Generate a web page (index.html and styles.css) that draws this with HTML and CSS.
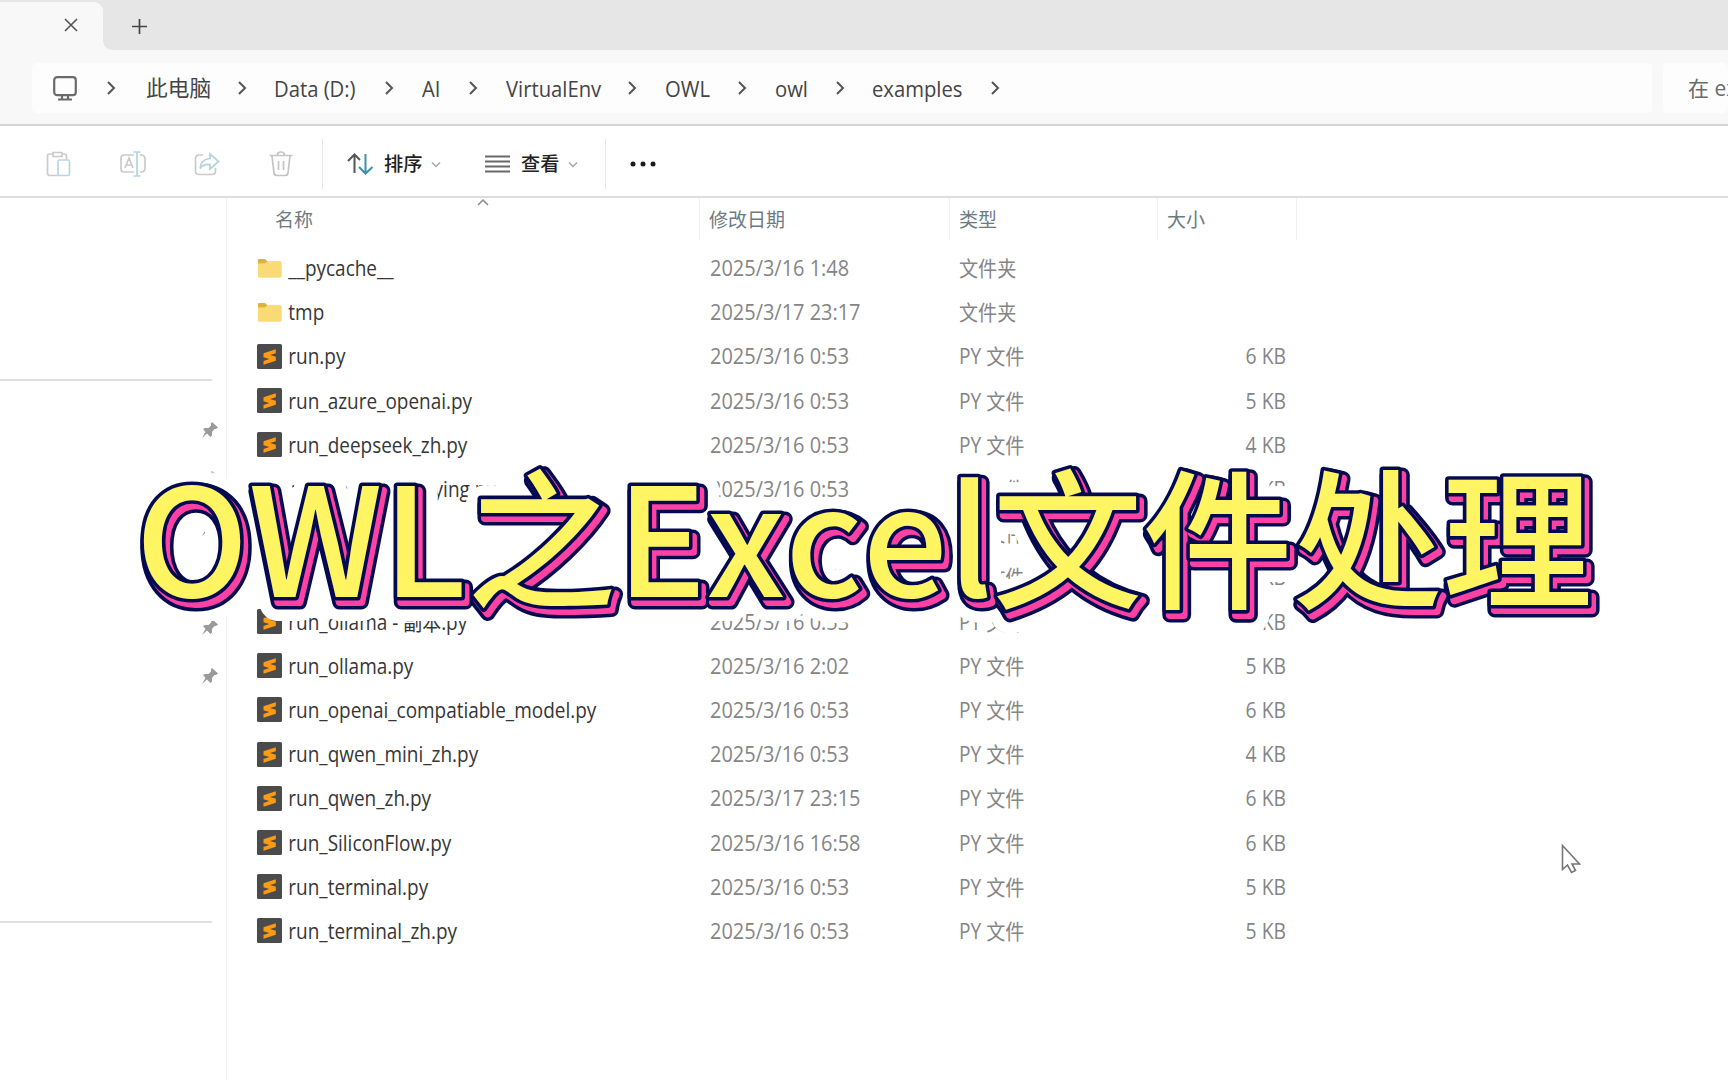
FILE: index.html
```html
<!DOCTYPE html>
<html lang="zh-CN">
<head>
<meta charset="utf-8">
<title>examples</title>
<link rel="stylesheet" href="styles.css">
</head>
<body>
<svg class="defs" aria-hidden="true">
  <symbol id="py" viewBox="0 0 25 25"><rect width="25" height="25" rx="1.5" fill="#4b4b4b"/><path d="M18.8 5.2 6.5 9.2v4l5.8 1.7-5.8 2v3.9l12.3-4v-4.1l-5.7-1.6 5.7-1.9z" fill="#ff9a12"/></symbol>
  <symbol id="folder" viewBox="0 0 25 20"><path d="M1 2.500Q1 1 2.500 1H8l2 2h13q1.500 0 1.500 1.500V18q0 1.500-1.500 1.500H2.500Q1 19.500 1 18z" fill="#ffe08a"/><path d="M1 2Q1 1 2 1h6l2.500 2.500L8 5.500H1z" fill="#d9b53c"/><path d="M1 6h7.500l2-2.500H23q1.500 0 1.500 1.500v13q0 1.500-1.500 1.500H2.500Q1 19.500 1 18z" fill="#f9da74"/></symbol>
  <symbol id="pin" viewBox="0 0 18 18"><path d="m11 1 6 5.500-2 1.500h-1.500L11 11v3.500L9.500 16 6 12.500 1 17l3.500-6L2 8l2-1h3.500l2.500-2.500V2.500z" fill="#9a9a9a"/></symbol>
  <symbol id="chev" viewBox="0 0 10 14"><path d="m2 1 6 6-6 6" fill="none" stroke="#555" stroke-width="2"/></symbol>
  <symbol id="down" viewBox="0 0 10 7"><path d="m1 1.500 4 4 4-4" fill="none" stroke="#a5a5a5" stroke-width="1.500"/></symbol>
</svg>
<div class="window">
  <header class="tabs">
    <div class="tab"><svg class="close" viewBox="0 0 14 14"><path d="m1 1 12 12M13 1 1 13"/></svg></div>
    <svg class="plus" viewBox="0 0 16 16"><path d="M8 0v16M0 8h16"/></svg>
  </header>
  <nav class="address">
    <div class="crumbs">
      <svg class="monitor" viewBox="0 0 24 25"><rect x="1.200" y="1.200" width="21.600" height="18" rx="3"/><path d="M9 19v4M15 19v4M5 23.500h14"/></svg>
      <svg class="chev c1"><use href="#chev"/></svg><span class="crumb pc">此电脑</span>
      <svg class="chev c2"><use href="#chev"/></svg><span class="crumb data">Data (D:)</span>
      <svg class="chev c3"><use href="#chev"/></svg><span class="crumb ai">AI</span>
      <svg class="chev c4"><use href="#chev"/></svg><span class="crumb env">VirtualEnv</span>
      <svg class="chev c5"><use href="#chev"/></svg><span class="crumb up">OWL</span>
      <svg class="chev c6"><use href="#chev"/></svg><span class="crumb low">owl</span>
      <svg class="chev c7"><use href="#chev"/></svg><span class="crumb ex">examples</span>
      <svg class="chev c8"><use href="#chev"/></svg>
    </div>
    <div class="search">在 examples</div>
  </nav>
  <div class="toolbar">
    <div class="actions">
      <svg viewBox="0 0 26 26"><path d="M12 24.500H4q-2.500 0-2.500-2.500V5Q1.500 3 4 3h3M17 3h1q2.500 0 2.500 2.500V9M7 1.500h9v4H7z" stroke="#cbcbcb"/><rect x="12" y="9" width="11.500" height="15.500" rx="1.500" stroke="#b9d6e6"/></svg>
      <svg viewBox="0 0 26 26"><path d="M14 4H4Q1 4 1 7v11q0 3 3 3h10M20 4h1q4 0 4 4v9q0 4-4 4h-1M5 17l4-10 4 10M6.500 14h5" stroke="#cbcbcb"/><path d="M17 1v24M13.500 1h7M13.500 25h7" stroke="#b4d4e2"/></svg>
      <svg viewBox="0 0 26 26"><path d="M9 4H5Q1.500 4 1.500 7.500V20q0 3.500 3.500 3.500h13q3.500 0 3.500-3.500v-3" stroke="#cbcbcb"/><path d="M16 3l8.500 7.500L16 18v-4.500q-7-.5-10 4Q7 8 16 7.500z" stroke="#b4d4dc"/></svg>
      <svg viewBox="0 0 26 26"><path d="M1.500 4.500h23M9.500 4q0-3 3.500-3t3.500 3M4 5l2 17q.5 2.500 3 2.500h8q2.500 0 3-2.500L22 5M10.500 10v9M15.500 10v9" stroke="#c4c4c4"/></svg>
    </div>
    <div class="group sort">
      <svg class="updown" viewBox="0 0 27 22"><path d="M7.500 20V1.500M1 8l6.500-6.500L13 7" stroke="#555"/><path d="M18.500 1v19M12 14l6.500 6.500L25.500 14" stroke="#3c8fb4"/></svg>
      <span class="label">排序</span><svg class="down"><use href="#down"/></svg>
    </div>
    <div class="group view">
      <svg class="lines" viewBox="0 0 25 18"><path d="M0 1.500h25M0 6.500h25M0 11.500h25M0 16.500h25"/></svg>
      <span class="label">查看</span><svg class="down"><use href="#down"/></svg>
    </div>
    <svg class="dots" viewBox="0 0 26 6"><circle cx="3" cy="3" r="2.500"/><circle cx="13" cy="3" r="2.500"/><circle cx="23" cy="3" r="2.500"/></svg>
  </div>
  <main class="body">
    <aside class="side">
      <div class="quick">
        <svg class="pin"><use href="#pin"/></svg><svg class="pin"><use href="#pin"/></svg><svg class="pin"><use href="#pin"/></svg>
        <svg class="pin"><use href="#pin"/></svg><svg class="pin"><use href="#pin"/></svg><svg class="pin"><use href="#pin"/></svg>
      </div>
    </aside>
    <section class="list">
      <div class="cols head">
        <span class="th first">名称<svg class="caret" viewBox="0 0 12 7"><path d="m1 6 5-5 5 5"/></svg></span><span class="th">修改日期</span><span class="th">类型</span><span class="th">大小</span>
      </div>
      <div class="cols row"><svg class="ico fold"><use href="#folder"/></svg><span class="name">__pycache__</span><span>2025/3/16 1:48</span><span>文件夹</span><span class="size"></span></div>
      <div class="cols row"><svg class="ico fold"><use href="#folder"/></svg><span class="name">tmp</span><span>2025/3/17 23:17</span><span>文件夹</span><span class="size"></span></div>
      <div class="cols row"><svg class="ico"><use href="#py"/></svg><span class="name">run.py</span><span>2025/3/16 0:53</span><span>PY 文件</span><span class="size">6 KB</span></div>
      <div class="cols row"><svg class="ico"><use href="#py"/></svg><span class="name">run_azure_openai.py</span><span>2025/3/16 0:53</span><span>PY 文件</span><span class="size">5 KB</span></div>
      <div class="cols row"><svg class="ico"><use href="#py"/></svg><span class="name">run_deepseek_zh.py</span><span>2025/3/16 0:53</span><span>PY 文件</span><span class="size">4 KB</span></div>
      <div class="cols row"><svg class="ico"><use href="#py"/></svg><span class="name">run_gaia_roleplaying.py</span><span>2025/3/16 0:53</span><span>PY 文件</span><span class="size">4 KB</span></div>
      <div class="cols row"><svg class="ico"><use href="#py"/></svg><span class="name">run_mcp.py</span><span>2025/3/16 0:53</span><span>PY 文件</span><span class="size">6 KB</span></div>
      <div class="cols row"><svg class="ico"><use href="#py"/></svg><span class="name">run_mini.py</span><span>2025/3/16 0:53</span><span>PY 文件</span><span class="size">4 KB</span></div>
      <div class="cols row"><svg class="ico"><use href="#py"/></svg><span class="name">run_ollama - 副本.py</span><span>2025/3/16 0:53</span><span>PY 文件</span><span class="size">5 KB</span></div>
      <div class="cols row"><svg class="ico"><use href="#py"/></svg><span class="name">run_ollama.py</span><span>2025/3/16 2:02</span><span>PY 文件</span><span class="size">5 KB</span></div>
      <div class="cols row"><svg class="ico"><use href="#py"/></svg><span class="name">run_openai_compatiable_model.py</span><span>2025/3/16 0:53</span><span>PY 文件</span><span class="size">6 KB</span></div>
      <div class="cols row"><svg class="ico"><use href="#py"/></svg><span class="name">run_qwen_mini_zh.py</span><span>2025/3/16 0:53</span><span>PY 文件</span><span class="size">4 KB</span></div>
      <div class="cols row"><svg class="ico"><use href="#py"/></svg><span class="name">run_qwen_zh.py</span><span>2025/3/17 23:15</span><span>PY 文件</span><span class="size">6 KB</span></div>
      <div class="cols row"><svg class="ico"><use href="#py"/></svg><span class="name">run_SiliconFlow.py</span><span>2025/3/16 16:58</span><span>PY 文件</span><span class="size">6 KB</span></div>
      <div class="cols row"><svg class="ico"><use href="#py"/></svg><span class="name">run_terminal.py</span><span>2025/3/16 0:53</span><span>PY 文件</span><span class="size">5 KB</span></div>
      <div class="cols row"><svg class="ico"><use href="#py"/></svg><span class="name">run_terminal_zh.py</span><span>2025/3/16 0:53</span><span>PY 文件</span><span class="size">5 KB</span></div>
    </section>
  </main>
</div>
<svg class="caption" viewBox="0 0 1728 1080">
  <defs><text id="cap" x="135.500" y="597.300">OWL之Excel文件处理</text></defs>
  <use href="#cap" class="halo" x="4" y="5"/>
  <use href="#cap" class="edge" x="4" y="5"/>
  <use href="#cap" class="depth" x="4" y="5"/>
  <use href="#cap" class="rim"/>
  <use href="#cap" class="face"/>
</svg>
<svg class="cursor" viewBox="0 0 20 30"><path d="M1.500 1.500v24l5-4.500 4 7.500 4-2-3.500-6.500h7.500z"/></svg>
</body>
</html>
```
FILE: styles.css
```css
* { box-sizing: border-box; }
body { margin: 0; background: #fff; font-family: "Open Sans", "Noto Sans CJK SC", sans-serif; color: #444; overflow: hidden; }
svg { display: block; flex: none; fill: none; overflow: visible; }
.defs { position: absolute; width: 0; height: 0; }
.window { width: 1728px; height: 1080px; display: flex; flex-direction: column; overflow: hidden; }

.tabs { height: 50px; background: #e6e6e6; display: flex; align-items: center; padding-top: 2px; }
.tab { position: relative; width: 103px; height: 48px; background: #f8f8f8; border-top-right-radius: 9px; padding: 16px 0 0 64px; }
.tab::after { content: ""; position: absolute; left: 103px; bottom: 0; width: 9px; height: 9px; background: radial-gradient(circle at 100% 0, #e6e6e6 8.5px, #f8f8f8 9px); }
.close { width: 14px; height: 14px; stroke: #555; stroke-width: 1.6; }
.plus { width: 15px; height: 15px; margin-left: 29px; stroke: #444; stroke-width: 1.8; }

.address { height: 76px; background: #f8f8f8; border-bottom: 2px solid #d3d3d3; display: flex; align-items: flex-start; gap: 11px; padding: 13px 0 0 32px; }
.crumbs { width: 1620px; height: 50px; background: #fdfdfd; border-radius: 5px; display: flex; align-items: center; padding-left: 21px; }
.monitor { width: 24px; height: 25px; stroke: #6a6a6a; stroke-width: 2.2; }
.chev { width: 10px; height: 14px; }
.crumb { font-size: 22px; line-height: 30px; white-space: nowrap; transform: scaleX(.92); transform-origin: 0 50%; height: 31px; }
.c1 { margin: 0 30px 0 29px; } .pc { width: 91px; font-size: 21.700px; transform: none; }
.c2 { margin-right: 27px; } .data { width: 110px; }
.c3 { margin-right: 28px; } .ai { width: 46px; }
.c4 { margin-right: 28px; } .env { width: 121px; }
.c5 { margin-right: 28px; } .up { width: 72px; }
.c6 { margin-right: 28px; } .low { width: 60px; }
.c7 { margin-right: 27px; } .ex { width: 118px; }
.search { flex: 1; height: 50px; background: #fdfdfd; border-radius: 5px; overflow: hidden; white-space: nowrap; padding-left: 25px; font-size: 21px; line-height: 50px; color: #6a6a6a; }

.toolbar { height: 72px; border-bottom: 2px solid #dedede; display: flex; align-items: center; padding: 6px 0 0 46px; }
.actions { height: 50px; width: 277px; display: flex; align-items: center; gap: 48px; border-right: 1px solid #e9e9e9; }
.actions svg { width: 26px; height: 26px; stroke-width: 1.7; }
.group { display: flex; align-items: center; }
.sort { padding-left: 24px; width: 162px; }
.updown { width: 27px; height: 22px; stroke-width: 2; margin-right: 10px; }
.label { width: 47px; font-size: 19.200px; line-height: 28px; font-weight: 500; color: #222; }
.down { width: 10px; height: 7px; }
.view { width: 121px; height: 50px; border-right: 1px solid #e9e9e9; }
.lines { width: 25px; height: 18px; stroke: #686868; stroke-width: 2; margin-right: 11px; }
.dots { width: 26px; height: 6px; margin-left: 24px; fill: #1c1c1c; }

.body { flex: 1; display: flex; }
.side { width: 227px; border-right: 1px solid #f1f1f1; }
.quick { width: 212px; margin-top: 181px; height: 544px; border-top: 2px solid #dfdfdf; border-bottom: 2px solid #dfdfdf; padding-top: 40px; display: flex; flex-direction: column; align-items: flex-end; gap: 31.200px; }
.pin { width: 18px; height: 18px; transform: translateX(7px); }
.list { flex: 1; }
.cols { display: grid; align-items: center; }
.head { grid-template-columns: 473px 250px 208px 139px; height: 48px; align-items: start; }
.th { height: 42px; border-right: 1px solid #f0f0f0; padding: 8px 0 0 9px; font-size: 19px; line-height: 28px; color: #6e7a82; }
.first { padding-left: 48px; position: relative; }
.caret { position: absolute; left: 250px; top: 1px; width: 12px; height: 7px; stroke: #8a8a8a; stroke-width: 1.5; }
.row { grid-template-columns: 25px 428px 249px 209px 118px; padding-left: 30px; height: 44.200px; font-size: 21px; line-height: 30px; color: #858585; }
.row span { white-space: nowrap; transform: scaleX(.95); transform-origin: 0 50%; }
.row span:nth-child(4) { transform: scaleX(.91); }
.row .name { padding-left: 7px; color: #363636; transform: scaleX(.903); }
.row .size { text-align: right; transform: scaleX(.92); transform-origin: 100% 50%; }
.ico { width: 25px; height: 25px; }
.fold { height: 20px; }

.caption { position: absolute; left: 0; top: 0; width: 1728px; height: 1080px; font-family: "Noto Sans CJK SC", sans-serif; font-weight: 500; font-size: 150px; font-kerning: none; stroke-linejoin: round; }
.halo { fill: #fff; stroke: #fff; stroke-width: 38px; }
.edge { fill: #040a50; stroke: #040a50; stroke-width: 15.200px; }
.depth { fill: #ff41a4; stroke: #ff41a4; stroke-width: 8px; }
.rim { fill: #040a50; stroke: #040a50; stroke-width: 7.200px; }
.face { fill: #fff462; }
.cursor { position: absolute; left: 1561px; top: 844px; width: 20px; height: 30px; fill: #fff; stroke: #777; stroke-width: 1.600; }
```
